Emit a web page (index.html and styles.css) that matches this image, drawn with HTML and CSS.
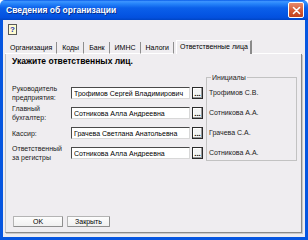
FILE: index.html
```html
<!doctype html>
<html lang="ru">
<head>
    <meta charset="UTF-8">
    <meta name="viewport" content="width=device-width, initial-scale=1.0">
    <title>Сведения об организации</title>
    <link rel="stylesheet" href="styles.css">
</head>
<body>
    <div class="window">
        <div class="titlebar">
            <span class="title">Сведения об организации</span>
            <span class="close">
                <svg width="9" height="9" viewBox="0 0 9 9">
                    <path d="M1.5 1.5 L7.5 7.5 M7.5 1.5 L1.5 7.5" stroke="#fff" stroke-width="1.6" stroke-linecap="round"/>
                </svg>
            </span>
        </div>
        <div class="client">
            <div class="toolbar">
                <span class="help">?</span>
            </div>
            <div class="tabs">
                <span class="tab">Организация</span>
                <span class="tab">Коды</span>
                <span class="tab">Банк</span>
                <span class="tab">ИМНС</span>
                <span class="tab">Налоги</span>
                <span class="tab active">Ответственные лица</span>
                <span class="tab-rest"></span>
            </div>
            <div class="panel">
                <div class="heading">Укажите ответственных лиц.</div>
                <div class="content">
                    <div class="fields">
                        <label for="head">Руководитель предприятия:</label>
                        <input type="text" id="head" value="Трофимов Сергей Владимирович" readonly>
                        <button type="button" class="browse">...</button>

                        <label for="acc">Главный бухгалтер:</label>
                        <input type="text" id="acc" value="Сотникова Алла Андреевна" readonly>
                        <button type="button" class="browse">...</button>

                        <label for="cash">Кассир:</label>
                        <input type="text" id="cash" value="Грачева Светлана Анатольевна" readonly>
                        <button type="button" class="browse">...</button>

                        <label for="reg">Ответственный за регистры</label>
                        <input type="text" id="reg" value="Сотникова Алла Андреевна" readonly>
                        <button type="button" class="browse">...</button>
                    </div>
                    <fieldset class="initials">
                        <legend>Инициалы</legend>
                        <div>Трофимов С.В.</div>
                        <div>Сотникова А.А.</div>
                        <div>Грачева С.А.</div>
                        <div>Сотникова А.А.</div>
                    </fieldset>
                </div>
                <div class="buttons">
                    <button type="button" class="btn ok">OK</button>
                    <button type="button" class="btn close-btn">Закрыть</button>
                </div>
            </div>
        </div>
    </div>
</body>
</html>
```

FILE: styles.css
```css
body {
    margin: 0;
    font-family: "Liberation Sans", Arial, sans-serif;
    font-size: 7px;
    color: #000;
}
.window {
    width: 308px;
    height: 240px;
}
.titlebar {
    display: flex;
    align-items: center;
    height: 20px;
    padding: 0 6px 0 6px;
    box-sizing: border-box;
    border-radius: 5px 5px 0 0;
    background: linear-gradient(to bottom, #0a5ce8 0%, #3d95ff 8%, #2a88fb 16%, #0b60ea 40%, #0556e4 70%, #0350de 88%, #0045c4 100%);
}
.title {
    color: #fff;
    font-weight: bold;
    font-size: 8.5px;
    text-shadow: 1px 1px 0 #0a2f8a;
}
.close {
    display: flex;
    align-items: center;
    justify-content: center;
    margin-left: auto;
    margin-right: -2px;
    width: 14px;
    height: 14px;
    border: 1px solid #fff;
    border-radius: 2px;
    background: linear-gradient(to bottom, #e88a6c, #d65a33 55%, #c0421e);
}
.client {
    height: 220px;
    box-sizing: border-box;
    border: 3px solid #0656e0;
    border-top: none;
    padding-left: 2px;
    background: #efedf0;
}
.toolbar {
    height: 20px;
    box-sizing: border-box;
    padding: 4px 0 0 3px;
}
.help {
    display: inline-block;
    width: 7px;
    height: 9px;
    line-height: 9px;
    border: 1px solid #5a5a5a;
    background: #fffbd0;
    color: #1530b0;
    font-weight: bold;
    font-size: 8px;
    text-align: center;
}
.tabs {
    display: flex;
    align-items: flex-end;
    height: 14px;
}
.tab {
    height: 12px;
    line-height: 11px;
    padding: 0 4px 0 5px;
    border-right: 1px solid #8e8e8e;
    border-bottom: 1px solid #fff;
    box-sizing: border-box;
}
.tab.active {
    height: 14px;
    line-height: 12px;
    padding: 0 2px 0 3px;
    margin-left: 2px;
    border-top: 1px solid #fff;
    border-left: 1px solid #fff;
    border-right: 2px solid #8a8a8a;
    border-bottom: none;
}
.tab-rest {
    flex: 1;
    border-bottom: 1px solid #fff;
    margin-right: 4px;
}
.panel {
    display: flex;
    flex-direction: column;
    width: 297px;
    height: 179px;
    box-sizing: border-box;
    padding: 2px 0 5px 6px;
    border-left: 1px solid #c4c4c4;
    border-right: 1px solid #8a8a8a;
    border-bottom: 1px solid #8a8a8a;
    box-shadow: 1px 1px 0 #c9c9c9;
}
.heading {
    font-weight: bold;
    font-size: 8.5px;
    line-height: 10px;
}
.content {
    display: flex;
    align-items: flex-start;
    margin-top: 7px;
}
.fields {
    display: grid;
    grid-template-columns: 57px 119px 11px;
    grid-auto-rows: 20px;
    column-gap: 2px;
    align-items: center;
    margin-top: 10px;
}
.fields label {
    line-height: 9px;
    color: #1a1a1a;
}
.fields input {
    height: 12px;
    width: 119px;
    box-sizing: border-box;
    margin: 0;
    padding: 0 2px;
    font: 7px "Liberation Sans", Arial, sans-serif;
    color: #000;
    background: #fff;
    border: 1px solid;
    border-color: #4a4a4a #d8d8d8 #d8d8d8 #4a4a4a;
    outline: none;
}
.browse {
    width: 11px;
    height: 12px;
    box-sizing: border-box;
    margin: 0;
    padding: 0;
    font: bold 8px "Liberation Sans", Arial, sans-serif;
    line-height: 12px;
    color: #000;
    background: #f4f4f4;
    border: 1px solid #2a2a2a;
    box-shadow: inset -1px -1px 0 #9a9a9a, inset 1px 1px 0 #fff;
}
.initials {
    width: 91px;
    height: 88px;
    box-sizing: border-box;
    margin: 0 0 0 3px;
    padding: 1px 2px 0;
    border: 1px solid #c2c2c2;
}
.initials legend {
    margin-left: 2px;
    padding: 0 1px;
    line-height: 9px;
    color: #1a1a1a;
}
.initials div {
    height: 20px;
    line-height: 20px;
    color: #1a1a1a;
}
.buttons {
    display: flex;
    gap: 4px;
    margin-top: auto;
    padding-left: 1px;
}
.btn {
    height: 11px;
    margin: 0;
    padding: 0;
    font: 7px "Liberation Sans", Arial, sans-serif;
    line-height: 9px;
    color: #000;
    background: linear-gradient(to bottom, #fdfdfd, #f0f0f0);
    border: 1px solid #b4b4b4;
    border-right-color: #8e8e8e;
    border-bottom-color: #8e8e8e;
    border-radius: 1px;
}
.ok {
    width: 50px;
}
.close-btn {
    width: 43px;
}
```
